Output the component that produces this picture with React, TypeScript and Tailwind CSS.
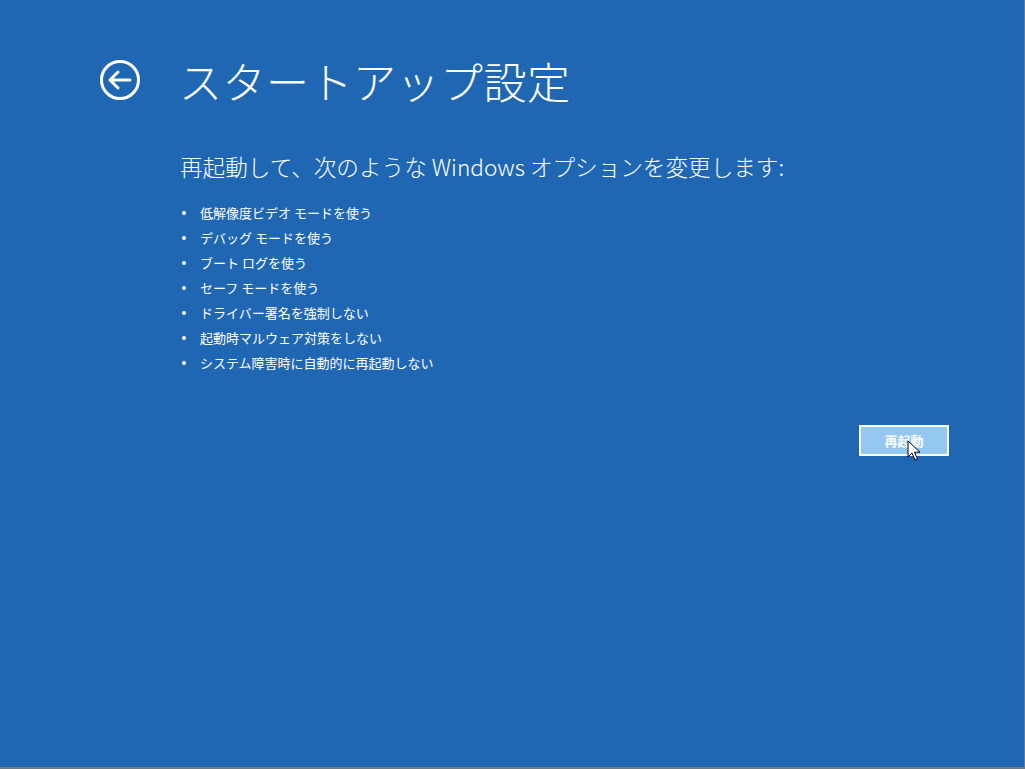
import React from "react";

const options = [
  "低解像度ビデオ モードを使う",
  "デバッグ モードを使う",
  "ブート ログを使う",
  "セーフ モードを使う",
  "ドライバー署名を強制しない",
  "起動時マルウェア対策をしない",
  "システム障害時に自動的に再起動しない",
];

const jp = { fontFamily: '"Noto Sans CJK JP", "Noto Sans", sans-serif' };

function BackIcon() {
  return (
    <svg width="42" height="42" viewBox="0 0 42 42" fill="none" stroke="white" strokeWidth="3">
      <circle cx="21" cy="21" r="18.5" />
      <path d="M11 21h20M19 13l-8 8 8 8" strokeLinecap="round" strokeLinejoin="round" />
    </svg>
  );
}

function Cursor() {
  return (
    <svg width="14" height="22" viewBox="0 0 14 22" className="absolute left-[48px] top-[15px]">
      <path
        d="M1 1v16l4-4 3 7 2.5-1-3-6.8H13z"
        fill="white"
        stroke="black"
        strokeWidth="1"
        strokeLinejoin="round"
      />
    </svg>
  );
}

export default function App() {
  return (
    <div
      className="w-[1025px] h-[769px] bg-[#2067b3] text-white border-r border-b-2 border-[#6f7780] flex flex-col"
      style={jp}
    >
      <div className="flex items-center pt-[55px] pl-[99px]">
        <BackIcon />
        <h1 className="ml-[38px] text-[43px] leading-[50px] font-light tracking-[0.5px]">
          スタートアップ設定
        </h1>
      </div>

      <div className="pl-[180px] pt-[47px]">
        <p className="text-[22.6px] leading-[30px] font-light">
          再起動して、次のような Windows オプションを変更します:
        </p>
        <ul className="mt-[18px] text-[13px] leading-[25px]">
          {options.map((o) => (
            <li key={o} className="flex items-center">
              <span className="ml-[2px] mr-[14px] w-[4px] h-[4px] rounded-full bg-white" />
              <span>{o}</span>
            </li>
          ))}
        </ul>
      </div>

      <div className="flex justify-end pr-[75px] pt-[50px]">
        <div className="relative">
          <button className="w-[90px] h-[31px] bg-[#94c8f1] border-2 border-white text-[13px] font-bold text-white">
            再起動
          </button>
          <Cursor />
        </div>
      </div>
    </div>
  );
}
